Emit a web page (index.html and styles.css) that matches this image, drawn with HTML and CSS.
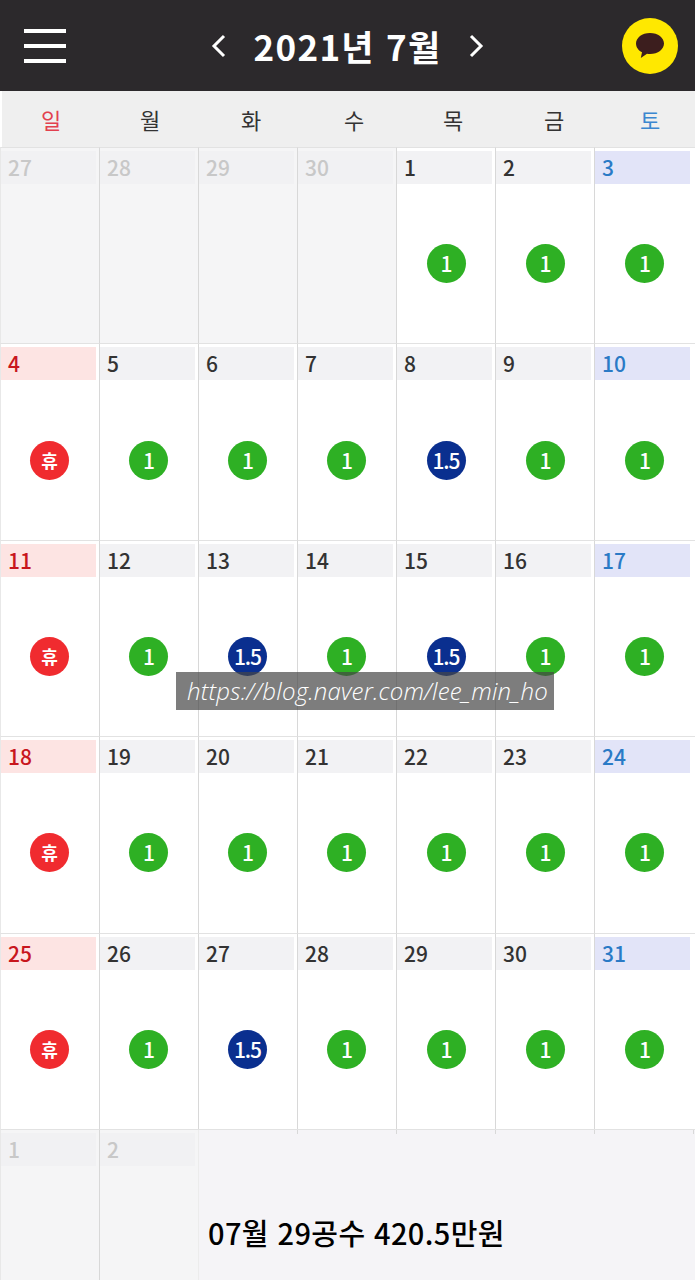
FILE: index.html
```html
<!DOCTYPE html>
<html lang="ko">
<head>
    <meta charset="UTF-8">
    <meta name="viewport" content="width=device-width, initial-scale=1.0">
    <title>2021년 7월 공수 달력</title>
    <link rel="stylesheet" href="styles.css">
</head>
<body>
    <header class="topbar">
        <div class="menu"><span></span><span></span><span></span></div>
        <div class="month-nav">
            <svg class="chevron" viewBox="0 0 15 24"><path d="M13 2 3 12l10 10"/></svg>
            <h1>2021년 7월</h1>
            <svg class="chevron" viewBox="0 0 15 24"><path d="M2 2l10 10L2 22"/></svg>
        </div>
        <div class="kakao">
            <svg viewBox="0 0 32 28"><path d="M16 1C8 1 2 5.700 2 11.500c0 3.700 2.400 6.900 6 8.800L6.800 26l6.200-4.300c1 .2 2 .3 3 .3 8 0 14-4.700 14-10.500S24 1 16 1z"/></svg>
        </div>
    </header>

    <div class="weekdays">
        <span class="sun">일</span><span>월</span><span>화</span><span>수</span><span>목</span><span>금</span><span class="sat">토</span>
    </div>

    <main class="calendar">
        <div class="cell off"><div class="date">27</div></div>
        <div class="cell off"><div class="date">28</div></div>
        <div class="cell off"><div class="date">29</div></div>
        <div class="cell off"><div class="date">30</div></div>
        <div class="cell"><div class="date">1</div><div class="body"><b class="badge">1</b></div></div>
        <div class="cell"><div class="date">2</div><div class="body"><b class="badge">1</b></div></div>
        <div class="cell sat"><div class="date">3</div><div class="body"><b class="badge">1</b></div></div>

        <div class="cell sun"><div class="date">4</div><div class="body"><b class="badge rest">휴</b></div></div>
        <div class="cell"><div class="date">5</div><div class="body"><b class="badge">1</b></div></div>
        <div class="cell"><div class="date">6</div><div class="body"><b class="badge">1</b></div></div>
        <div class="cell"><div class="date">7</div><div class="body"><b class="badge">1</b></div></div>
        <div class="cell"><div class="date">8</div><div class="body"><b class="badge extra">1.5</b></div></div>
        <div class="cell"><div class="date">9</div><div class="body"><b class="badge">1</b></div></div>
        <div class="cell sat"><div class="date">10</div><div class="body"><b class="badge">1</b></div></div>

        <div class="cell sun"><div class="date">11</div><div class="body"><b class="badge rest">휴</b></div></div>
        <div class="cell"><div class="date">12</div><div class="body"><b class="badge">1</b></div></div>
        <div class="cell"><div class="date">13</div><div class="body"><b class="badge extra">1.5</b></div></div>
        <div class="cell"><div class="date">14</div><div class="body"><b class="badge">1</b></div></div>
        <div class="cell"><div class="date">15</div><div class="body"><b class="badge extra">1.5</b></div></div>
        <div class="cell"><div class="date">16</div><div class="body"><b class="badge">1</b></div></div>
        <div class="cell sat"><div class="date">17</div><div class="body"><b class="badge">1</b></div></div>

        <div class="cell sun"><div class="date">18</div><div class="body"><b class="badge rest">휴</b></div></div>
        <div class="cell"><div class="date">19</div><div class="body"><b class="badge">1</b></div></div>
        <div class="cell"><div class="date">20</div><div class="body"><b class="badge">1</b></div></div>
        <div class="cell"><div class="date">21</div><div class="body"><b class="badge">1</b></div></div>
        <div class="cell"><div class="date">22</div><div class="body"><b class="badge">1</b></div></div>
        <div class="cell"><div class="date">23</div><div class="body"><b class="badge">1</b></div></div>
        <div class="cell sat"><div class="date">24</div><div class="body"><b class="badge">1</b></div></div>

        <div class="cell sun"><div class="date">25</div><div class="body"><b class="badge rest">휴</b></div></div>
        <div class="cell"><div class="date">26</div><div class="body"><b class="badge">1</b></div></div>
        <div class="cell"><div class="date">27</div><div class="body"><b class="badge extra">1.5</b></div></div>
        <div class="cell"><div class="date">28</div><div class="body"><b class="badge">1</b></div></div>
        <div class="cell"><div class="date">29</div><div class="body"><b class="badge">1</b></div></div>
        <div class="cell"><div class="date">30</div><div class="body"><b class="badge">1</b></div></div>
        <div class="cell sat"><div class="date">31</div><div class="body"><b class="badge">1</b></div></div>

        <div class="cell off"><div class="date">1</div></div>
        <div class="cell off"><div class="date">2</div></div>
        <div class="summary">07월 29공수 420.5만원</div>
    </main>

    <div class="watermark">https://blog.naver.com/lee_min_ho</div>
</body>
</html>
```
FILE: styles.css
```css
body {
    font-family: "Noto Sans CJK KR", "Noto Sans", sans-serif;
    margin: 0;
    height: 1280px;
    overflow: hidden;
    background-color: #fff;
    position: relative;
}
.topbar {
    height: 91px;
    background-color: #2c292c;
    display: flex;
    align-items: center;
    justify-content: space-between;
    padding: 0 17px 0 24px;
}
.menu {
    width: 42px;
    display: flex;
    flex-direction: column;
    gap: 11px;
}
.menu span {
    height: 4px;
    background-color: #fff;
}
.month-nav {
    display: flex;
    align-items: center;
    gap: 28px;
    margin-left: 7px;
}
.month-nav h1 {
    margin: 0;
    color: #fff;
    font-size: 35px;
    font-weight: 700;
    letter-spacing: 1.3px;
    line-height: 1;
    white-space: nowrap;
}
.chevron {
    width: 15px;
    height: 24px;
    fill: none;
    stroke: #fff;
    stroke-width: 3;
}
.kakao {
    width: 56px;
    height: 56px;
    border-radius: 50%;
    background-color: #ffe800;
    display: flex;
    align-items: center;
    justify-content: center;
}
.kakao svg {
    width: 32px;
    height: 28px;
    fill: #3c1e1e;
}
.weekdays {
    height: 56px;
    margin-left: 2px;
    background-color: #efefef;
    display: grid;
    grid-template-columns: 98px 100px 102px 104px 94px 108px 84px 3px;
    align-items: center;
    text-align: center;
    font-size: 22px;
    color: #333;
}
.weekdays .sun {
    color: #e2404e;
}
.weekdays .sat {
    color: #3b87d0;
}
.calendar {
    display: grid;
    grid-template-columns: repeat(6, 99px) 1fr;
    grid-template-rows: repeat(5, 196.4px) 151px;
}
.cell {
    border-top: 1px solid #e2e2e2;
    border-left: 1px solid #d8d8d8;
    padding: 3px 3px 0 0;
    display: flex;
    flex-direction: column;
    min-width: 0;
}
.cell:nth-child(7n+1) {
    border-left-color: #e8e8e8;
}
.cell.sat .date {
    margin-right: 2px;
}
.date {
    height: 33px;
    background-color: #f2f2f4;
    color: #333;
    font-size: 21px;
    font-weight: 500;
    line-height: 33px;
    padding-left: 7px;
}
.body {
    flex: 1;
    display: flex;
    align-items: center;
    justify-content: center;
    padding-left: 2px;
}
.cell:nth-child(7n+5) .body,
.cell:nth-child(7n+6) .body {
    padding-left: 3px;
}
.off {
    background-color: #f5f5f6;
}
.off .date {
    background-color: #f1f1f3;
    color: #c8c8c8;
}
.sun .date {
    background-color: #fde4e3;
    color: #c8161d;
}
.sat .date {
    background-color: #e2e4f8;
    color: #2a7ac6;
}
.badge {
    width: 39px;
    height: 39px;
    border-radius: 50%;
    background-color: #2eb024;
    color: #fff;
    font-size: 21px;
    font-weight: 500;
    line-height: 39px;
    text-align: center;
    letter-spacing: -1px;
}
.rest {
    background-color: #f02b2f;
    font-size: 18px;
    font-weight: 700;
    letter-spacing: 0;
}
.extra {
    background-color: #0a2f8f;
}
.summary {
    grid-column: span 5;
    background: repeating-linear-gradient(90deg, #d8d8d8 0 1px, transparent 1px 99px) top / 100% 4px no-repeat, #f5f4f7;
    box-shadow: inset 1px 0 #ececec;
    border-top: 1px solid #e2e2e2;
    padding: 83px 0 0 10px;
    font-size: 29px;
    font-weight: 500;
    letter-spacing: .4px;
    line-height: 38px;
    color: #000;
}
.watermark {
    position: absolute;
    left: 176px;
    top: 672px;
    width: 378px;
    height: 38px;
    padding-left: 5px;
    box-sizing: border-box;
    background-color: rgba(70, 70, 70, 0.7);
    color: #fff;
    font-family: "Open Sans", sans-serif;
    font-size: 24px;
    font-style: italic;
    font-weight: 300;
    letter-spacing: .2px;
    line-height: 38px;
    text-align: center;
    white-space: nowrap;
}
```
